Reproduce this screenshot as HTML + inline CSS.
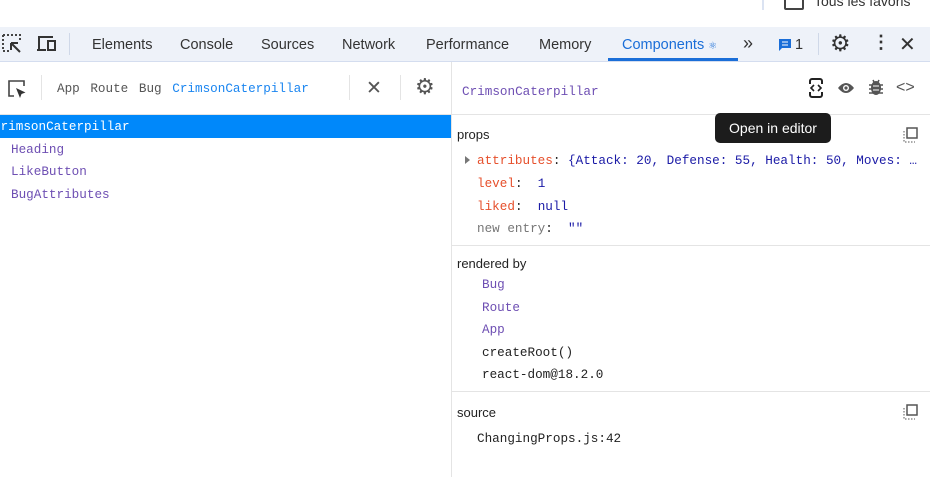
<!DOCTYPE html><html><head><style>
body{margin:0;width:930px;height:477px;overflow:hidden;background:#fff;font-family:"Liberation Sans",sans-serif;position:relative}
.a{position:absolute;white-space:nowrap}
.m{font-family:"Liberation Mono",monospace;font-size:12.65px}
.tab{font-size:14.5px;color:#333;top:37px}
.pur{color:#6e4fb3}
</style></head><body>
<div class="a" style="left:762px;top:0;width:2px;height:10px;background:#dbe3f2"></div>
<div class="a" style="left:784px;top:-6px;width:16px;height:12px;border:2px solid #444;border-radius:2px"></div>
<div class="a" style="left:814px;top:-7px;font-size:14px;color:#333">Tous les favoris</div>
<div class="a" style="left:0;top:27px;width:930px;height:34px;background:#eef2f9;border-bottom:1px solid #d4ddef"></div>
<svg class="a" style="left:2px;top:34px" width="22" height="20"><path d="M1 1h17v6M1 1v16h6" stroke="#444" stroke-width="2" stroke-dasharray="2 2" fill="none"/><path d="M9 9l9 9M9 9v7M9 9h7" stroke="#333" stroke-width="2" fill="none"/></svg>
<svg class="a" style="left:36px;top:35px" width="22" height="18"><path d="M3 14V2h14M1 15h9" stroke="#333" stroke-width="2" fill="none"/><rect x="12" y="6" width="7" height="9" stroke="#333" stroke-width="2" fill="none"/></svg>
<div class="a" style="left:69px;top:33px;width:1px;height:22px;background:#cfd8e8"></div>
<div class="a tab" style="left:92px">Elements</div>
<div class="a tab" style="left:180px">Console</div>
<div class="a tab" style="left:261px">Sources</div>
<div class="a tab" style="left:342px">Network</div>
<div class="a tab" style="left:426px">Performance</div>
<div class="a tab" style="left:539px">Memory</div>
<div class="a tab" style="left:622px;color:#1a6ed8">Components <span style="font-size:10px">⚛</span></div>
<div class="a" style="left:608px;top:58px;width:130px;height:3px;background:#1a6ed8"></div>
<div class="a tab" style="left:743px;top:33px;font-size:18px">»</div>
<svg class="a" style="left:778px;top:38px" width="14" height="14"><path d="M1 1h12v9H4l-3 3z" fill="#1a6ed8"/><path d="M4 4h6M4 7h6" stroke="#fff"/></svg>
<div class="a tab" style="left:795px">1</div>
<div class="a" style="left:818px;top:33px;width:1px;height:22px;background:#cfd8e8"></div>
<div class="a" style="left:830px;top:30px;font-size:23px;color:#333">⚙</div>
<div class="a" style="left:872px;top:32px;font-size:18px;color:#333;font-weight:bold">⋮</div>
<div class="a" style="left:899px;top:32px;font-size:20px;color:#333">✕</div>
<!-- left pane -->
<div class="a" style="left:451px;top:62px;width:1px;height:415px;background:#e4e4e4"></div>
<div class="a" style="left:0;top:114px;width:930px;height:1px;background:#e4e4e4"></div>
<svg class="a" style="left:7px;top:79px" width="20" height="20"><path d="M7 17H2V2h15v5" stroke="#444" stroke-width="1.6" fill="none"/><path d="M9 9l4 10 1.5-4 4-1.5z" fill="#333"/></svg>
<div class="a" style="left:41px;top:75px;width:1px;height:25px;background:#e4e4e4"></div>
<div class="a m" style="left:57px;top:81px;color:#555">App <span style="margin-left:3px">Route</span> <span style="margin-left:3px">Bug</span> <span style="color:#1a85f0;margin-left:3px">CrimsonCaterpillar</span></div>
<div class="a" style="left:349px;top:75px;width:1px;height:25px;background:#e4e4e4"></div>
<div class="a" style="left:366px;top:77px;font-size:19px;color:#555">✕</div>
<div class="a" style="left:400px;top:75px;width:1px;height:25px;background:#e4e4e4"></div>
<div class="a" style="left:415px;top:74px;font-size:22px;color:#555">⚙</div>
<div class="a" style="left:0;top:115px;width:451px;height:23px;background:#0088fa"></div>
<div class="a m" style="left:-7px;top:119px;color:#fff">CrimsonCaterpillar</div>
<div class="a m pur" style="left:11px;top:142px">Heading</div>
<div class="a m pur" style="left:11px;top:164px">LikeButton</div>
<div class="a m pur" style="left:11px;top:187px">BugAttributes</div>
<!-- right -->
<div class="a m pur" style="left:462px;top:84px">CrimsonCaterpillar</div>
<svg class="a" style="left:808px;top:78px" width="16" height="20"><rect x="2" y="1" width="12" height="18" rx="2" fill="none" stroke="#222" stroke-width="2"/><rect x="0" y="6" width="16" height="8" fill="#fff"/><path d="M6 7l-3 3 3 3M10 7l3 3-3 3" stroke="#222" stroke-width="1.6" fill="none"/></svg>
<svg class="a" style="left:837px;top:81px" width="18" height="14"><path d="M1 7Q9-3 17 7Q9 17 1 7z" fill="#555"/><circle cx="9" cy="7" r="3" fill="#fff"/><circle cx="9" cy="7" r="1.6" fill="#555"/></svg>
<svg class="a" style="left:868px;top:78px" width="16" height="18"><ellipse cx="8" cy="10" rx="5" ry="7" fill="#555"/><path d="M1 7h14M1 11h14M1 15h14M5 2l1 2M11 2l-1 2" stroke="#555" stroke-width="1.5"/><path d="M5 8h6M5 12h6" stroke="#fff"/></svg>
<div class="a" style="left:896px;top:79px;font-size:16px;color:#555">&lt;&gt;</div>
<div class="a" style="left:457px;top:127px;font-size:13px;color:#222">props</div>
<svg class="a" style="left:902px;top:127px" width="16" height="16"><rect x="5" y="1" width="10" height="10" stroke="#555" stroke-width="1.5" fill="none"/><path d="M2 4v11h11" stroke="#555" stroke-dasharray="1.5 1.5" fill="none"/></svg>
<div class="a" style="left:465px;top:156px;width:0;height:0;border-left:5px solid #777;border-top:4px solid transparent;border-bottom:4px solid transparent"></div>
<div class="a m" style="left:477px;top:153px;color:#1a1aa6"><span style="color:#e64f2b">attributes</span><span style="color:#222">:</span> {Attack: 20, Defense: 55, Health: 50, Moves: …</div>
<div class="a m" style="left:477px;top:176px;color:#1a1aa6"><span style="color:#e64f2b">level</span><span style="color:#222">:</span>&nbsp; 1</div>
<div class="a m" style="left:477px;top:199px;color:#1a1aa6"><span style="color:#e64f2b">liked</span><span style="color:#222">:</span>&nbsp; null</div>
<div class="a m" style="left:477px;top:221px;color:#777">new entry<span style="color:#222">:</span>&nbsp; <span style="color:#1a1aa6">""</span></div>
<div class="a" style="left:452px;top:245px;width:478px;height:1px;background:#e4e4e4"></div>
<div class="a" style="left:457px;top:256px;font-size:13px;color:#222">rendered by</div>
<div class="a m pur" style="left:482px;top:277px">Bug</div>
<div class="a m pur" style="left:482px;top:300px">Route</div>
<div class="a m pur" style="left:482px;top:322px">App</div>
<div class="a m" style="left:482px;top:345px;color:#222">createRoot()</div>
<div class="a m" style="left:482px;top:367px;color:#222">react-dom@18.2.0</div>
<div class="a" style="left:452px;top:391px;width:478px;height:1px;background:#e4e4e4"></div>
<div class="a" style="left:457px;top:405px;font-size:13px;color:#222">source</div>
<svg class="a" style="left:902px;top:404px" width="16" height="16"><rect x="5" y="1" width="10" height="10" stroke="#555" stroke-width="1.5" fill="none"/><path d="M2 4v11h11" stroke="#555" stroke-dasharray="1.5 1.5" fill="none"/></svg>
<div class="a m" style="left:477px;top:431px;color:#222">ChangingProps.js:42</div>
<div class="a" style="left:715px;top:113px;width:116px;height:30px;background:#1c1c1c;border-radius:5px;color:#fff;font-size:14px;line-height:30px;text-align:center">Open in editor</div>
</body></html>
